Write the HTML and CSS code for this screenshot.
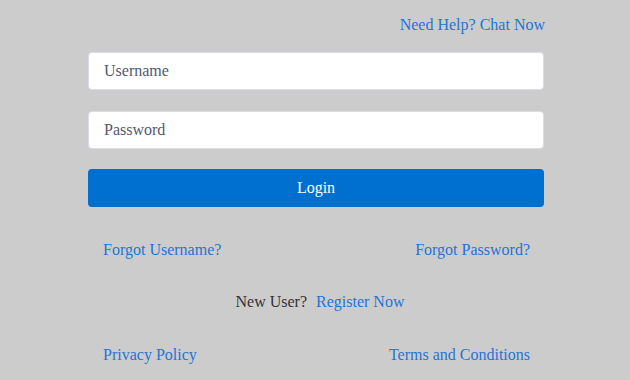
FILE: index.html
```html
<!DOCTYPE html>
<html lang="en">
<head>
    <meta charset="UTF-8">
    <meta name="viewport" content="width=device-width, initial-scale=1.0">
    <title>Login</title>
    <link rel="stylesheet" href="styles.css">
</head>
<body>
    <div class="login-box">
        <div class="help">
            <a href="#">Need Help? Chat Now</a>
        </div>

        <form class="login-form">
            <input type="text" placeholder="Username">
            <input type="password" placeholder="Password">
            <button type="button">Login</button>
        </form>

        <div class="link-row">
            <a href="#">Forgot Username?</a>
            <a href="#">Forgot Password?</a>
        </div>

        <div class="register">
            <span>New User?</span>
            <a href="#">Register Now</a>
        </div>

        <div class="link-row">
            <a href="#">Privacy Policy</a>
            <a href="#">Terms and Conditions</a>
        </div>
    </div>
</body>
</html>
```

FILE: styles.css
```css
body {
    margin: 0;
    background: #cccccc;
    font-family: 'Liberation Serif', 'Times New Roman', serif;
    font-size: 16px;
    color: #333;
}

a {
    color: #1f74d6;
    text-decoration: none;
}

.login-box {
    width: 456px;
    margin-left: 88px;
    padding-top: 15px;
}

.help {
    text-align: right;
    line-height: 20px;
    margin-right: -1px;
    margin-bottom: 17px;
}

.login-form {
    display: flex;
    flex-direction: column;
    gap: 21px;
}

.login-form input {
    height: 38px;
    box-sizing: border-box;
    border: 1px solid #dadce6;
    border-radius: 4px;
    background: #fff;
    padding: 0 15px;
    font-family: inherit;
    font-size: 16px;
    color: #333;
    outline: none;
}

.login-form input::placeholder {
    color: #515873;
    opacity: 1;
}

.login-form button {
    height: 38px;
    margin-top: -1px;
    border: none;
    border-radius: 4px;
    background: #0070d0;
    color: #fff;
    font-family: inherit;
    font-size: 16px;
    cursor: pointer;
}

.link-row {
    display: flex;
    justify-content: space-between;
    padding: 0 14px 0 15px;
    line-height: 20px;
    margin-top: 33px;
}

.register {
    display: flex;
    justify-content: center;
    gap: 9px;
    padding-left: 8px;
    line-height: 20px;
    margin-top: 32px;
}
```
